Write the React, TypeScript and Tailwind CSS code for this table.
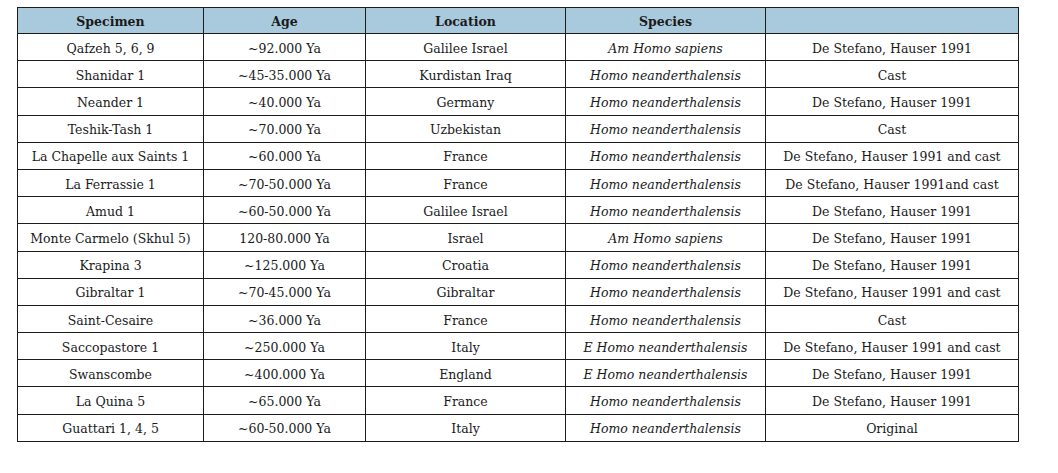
const rows: [string, string, string, string, string][] = [
  ['Qafzeh 5, 6, 9', '~92.000 Ya', 'Galilee Israel', 'Am Homo sapiens', 'De Stefano, Hauser 1991'],
  ['Shanidar 1', '~45-35.000 Ya', 'Kurdistan Iraq', 'Homo neanderthalensis', 'Cast'],
  ['Neander 1', '~40.000 Ya', 'Germany', 'Homo neanderthalensis', 'De Stefano, Hauser 1991'],
  ['Teshik-Tash 1', '~70.000 Ya', 'Uzbekistan', 'Homo neanderthalensis', 'Cast'],
  ['La Chapelle aux Saints 1', '~60.000 Ya', 'France', 'Homo neanderthalensis', 'De Stefano, Hauser 1991 and cast'],
  ['La Ferrassie 1', '~70-50.000 Ya', 'France', 'Homo neanderthalensis', 'De Stefano, Hauser 1991and cast'],
  ['Amud 1', '~60-50.000 Ya', 'Galilee Israel', 'Homo neanderthalensis', 'De Stefano, Hauser 1991'],
  ['Monte Carmelo (Skhul 5)', '120-80.000 Ya', 'Israel', 'Am Homo sapiens', 'De Stefano, Hauser 1991'],
  ['Krapina 3', '~125.000 Ya', 'Croatia', 'Homo neanderthalensis', 'De Stefano, Hauser 1991'],
  ['Gibraltar 1', '~70-45.000 Ya', 'Gibraltar', 'Homo neanderthalensis', 'De Stefano, Hauser 1991 and cast'],
  ['Saint-Cesaire', '~36.000 Ya', 'France', 'Homo neanderthalensis', 'Cast'],
  ['Saccopastore 1', '~250.000 Ya', 'Italy', 'E Homo neanderthalensis', 'De Stefano, Hauser 1991 and cast'],
  ['Swanscombe', '~400.000 Ya', 'England', 'E Homo neanderthalensis', 'De Stefano, Hauser 1991'],
  ['La Quina 5', '~65.000 Ya', 'France', 'Homo neanderthalensis', 'De Stefano, Hauser 1991'],
  ['Guattari 1, 4, 5', '~60-50.000 Ya', 'Italy', 'Homo neanderthalensis', 'Original'],
]

const cell = 'border border-[#1c1c1c] px-1 pt-1 pb-0 text-center align-middle whitespace-nowrap'

export default function App() {
  return (
    <div className="min-h-screen bg-white pl-[17px] pt-[7px] font-['DejaVu_Serif',serif] text-[12.5px] text-[#1a1a1a]">
      <table className="w-[1001px] table-fixed border-collapse">
        <colgroup>
          <col className="w-[186px]" />
          <col className="w-[162px]" />
          <col className="w-[200px]" />
          <col className="w-[200px]" />
          <col className="w-[253px]" />
        </colgroup>
        <thead>
          <tr className="h-[26px] bg-[#a9c9dd] font-bold">
            <th className={cell}>Specimen</th>
            <th className={cell}>Age</th>
            <th className={cell}>Location</th>
            <th className={cell}>Species</th>
            <th className={cell}></th>
          </tr>
        </thead>
        <tbody>
          {rows.map((r) => (
            <tr key={r[0]} className="h-[27.2px]">
              <td className={cell}>{r[0]}</td>
              <td className={cell}>{r[1]}</td>
              <td className={cell}>{r[2]}</td>
              <td className={cell + ' italic'}>{r[3]}</td>
              <td className={cell}>{r[4]}</td>
            </tr>
          ))}
        </tbody>
      </table>
    </div>
  )
}
